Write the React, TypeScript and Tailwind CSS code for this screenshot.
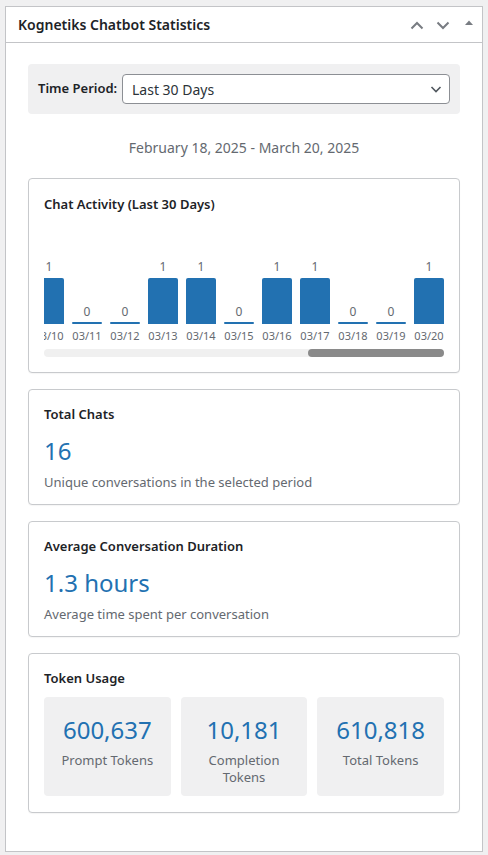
import React from "react";

const dayLabels: string[] = [];
for (let d = 10; d <= 20; d++) dayLabels.push(`03/${String(d).padStart(2, "0")}`);
const values = [1, 0, 0, 1, 1, 0, 1, 1, 0, 0, 1];

function StatCard({ title, value, desc }: { title: string; value: string; desc: string }) {
  return (
    <div className="mt-4 rounded-[4px] border border-[#c8cacd] bg-white px-[15px] pt-4 pb-[13px] shadow-[0_1px_1px_rgba(0,0,0,0.04)]">
      <h3 className="text-[13px] font-semibold leading-[16px] text-[#1d2327]">{title}</h3>
      <div className="mt-[13px] text-[24px] leading-[32px] text-[#2271b1]">{value}</div>
      <p className="mt-[6px] text-[13px] leading-[18px] text-[#646970]">{desc}</p>
    </div>
  );
}

function TokenBox({ value, label }: { value: string; label: string }) {
  return (
    <div className="flex flex-col items-center rounded-[4px] bg-[#f0f0f1] px-[12px] pt-[17px] pb-[10px] text-center">
      <div className="text-[24px] leading-[32px] text-[#2271b1]">{value}</div>
      <div className="mt-[6px] text-[13px] leading-[17px] text-[#646970]">{label}</div>
    </div>
  );
}

export default function App() {
  return (
    <div className="min-h-[855px] bg-[#f0f0f1] pt-[6px] pl-[5px] pb-[4px] font-['Noto_Sans',sans-serif]">
      <div className="w-[478px] border border-[#c3c4c7] bg-white">
        <div className="flex h-[36px] items-center border-b border-[#c3c4c7] pl-[12px]">
          <h2 className="flex-1 text-[14px] font-semibold text-[#1d2327]">Kognetiks Chatbot Statistics</h2>
          <div className="flex">
            <div className="flex w-[26px] justify-center pt-[2px]">
              <svg width="14" height="9" viewBox="0 0 14 9">
                <path d="M1.5 7.5 L7 2 L12.5 7.5" fill="none" stroke="#787c82" strokeWidth="2" />
              </svg>
            </div>
            <div className="flex w-[26px] justify-center pt-[2px]">
              <svg width="14" height="9" viewBox="0 0 14 9">
                <path d="M1.5 1.5 L7 7 L12.5 1.5" fill="none" stroke="#787c82" strokeWidth="2" />
              </svg>
            </div>
            <div className="flex w-[26px] justify-center">
              <svg width="10" height="7" viewBox="0 0 10 7">
                <path d="M1 6 L5 1.5 L9 6 Z" fill="#787c82" />
              </svg>
            </div>
          </div>
        </div>

        <div className="px-[22px] pt-[21px] pb-[38px]">
          <div className="flex h-[50px] items-center rounded-[4px] bg-[#f0f0f1] px-[10px]">
            <span className="w-[84px] text-[13px] font-semibold text-[#1d2327]">Time Period:</span>
            <div className="flex h-[30px] flex-1 items-center justify-between rounded-[4px] border border-[#8c8f94] bg-white pl-[9px] pr-[6px]">
              <span className="text-[14px] text-[#2c3338]">Last 30 Days</span>
              <svg width="14" height="14" viewBox="0 0 14 14">
                <path d="M2.5 5 L7 9.5 L11.5 5" fill="none" stroke="#50575e" strokeWidth="1.6" />
              </svg>
            </div>
          </div>

          <p className="mt-[24px] text-center text-[14px] leading-[20px] text-[#646970]">
            February 18, 2025 - March 20, 2025
          </p>

          <div className="mt-[20px] rounded-[4px] border border-[#c8cacd] bg-white px-[15px] pt-4 pb-[15px] shadow-[0_1px_1px_rgba(0,0,0,0.04)]">
            <h3 className="text-[13px] font-semibold leading-[18px] text-[#1d2327]">Chat Activity (Last 30 Days)</h3>
            <div className="mt-[46px] flex items-end justify-end gap-[8px] overflow-hidden">
              {dayLabels.map((lab, i) => {
                const v = values[i];
                return (
                  <div key={lab} className="flex w-[30px] shrink-0 flex-col items-center">
                    <span className="text-[12px] leading-[16px] text-[#646970]">{v}</span>
                    {v > 0 ? (
                      <div className="mt-[3px] h-[46px] w-[30px] rounded-t-[2px] bg-[#2271b1]" />
                    ) : (
                      <div className="mt-[2px] h-[2px] w-[30px] rounded-[2px] bg-[#2271b1]" />
                    )}
                    <span className="mt-[5px] whitespace-nowrap text-[11px] leading-[14px] text-[#646970]">{lab}</span>
                  </div>
                );
              })}
            </div>
            <div className="mt-[6px] flex h-[8px] rounded-full bg-[#f0f0f0]">
              <div className="ml-auto h-[8px] w-[136px] rounded-full bg-[#8a8a8a]" />
            </div>
          </div>

          <StatCard title="Total Chats" value="16" desc="Unique conversations in the selected period" />
          <StatCard title="Average Conversation Duration" value="1.3 hours" desc="Average time spent per conversation" />

          <div className="mt-4 rounded-[4px] border border-[#c8cacd] bg-white px-[15px] pt-4 pb-[16px] shadow-[0_1px_1px_rgba(0,0,0,0.04)]">
            <h3 className="text-[13px] font-semibold leading-[16px] text-[#1d2327]">Token Usage</h3>
            <div className="mt-[11px] grid grid-cols-3 gap-[10px]">
              <TokenBox value="600,637" label="Prompt Tokens" />
              <TokenBox value="10,181" label="Completion Tokens" />
              <TokenBox value="610,818" label="Total Tokens" />
            </div>
          </div>
        </div>
      </div>
    </div>
  );
}
